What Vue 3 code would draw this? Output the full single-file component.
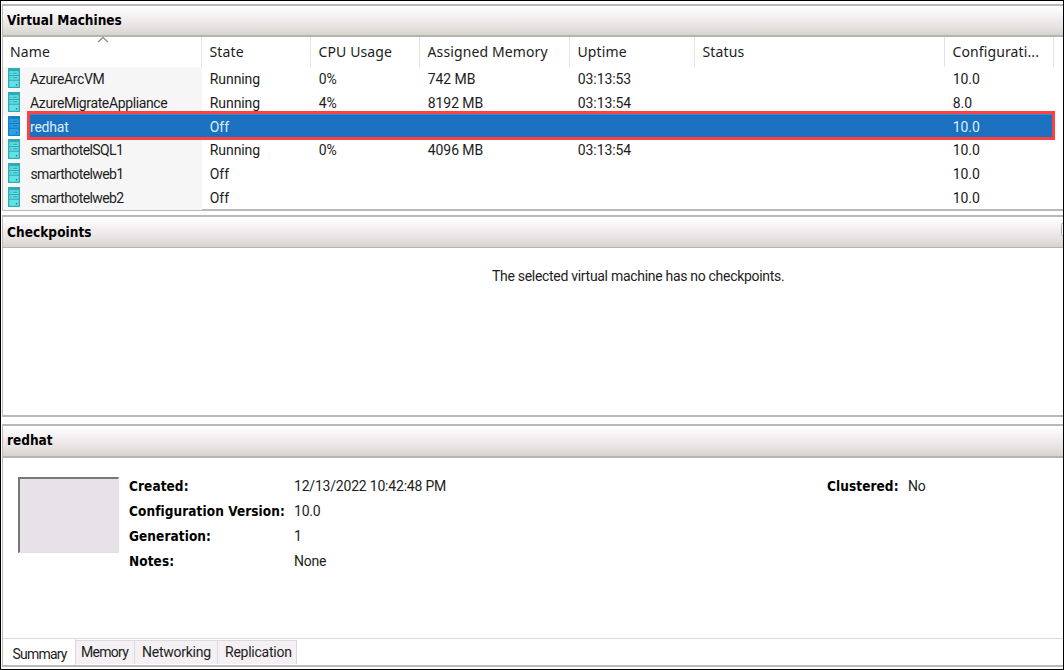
<script setup>
const columns = ['Name', 'State', 'CPU Usage', 'Assigned Memory', 'Uptime', 'Status', 'Configurati...']
const machines = [
  { name: 'AzureArcVM', state: 'Running', cpu: '0%', memory: '742 MB', uptime: '03:13:53', version: '10.0' },
  { name: 'AzureMigrateAppliance', state: 'Running', cpu: '4%', memory: '8192 MB', uptime: '03:13:54', version: '8.0' },
  { name: 'redhat', state: 'Off', cpu: '', memory: '', uptime: '', version: '10.0', selected: true },
  { name: 'smarthotelSQL1', state: 'Running', cpu: '0%', memory: '4096 MB', uptime: '03:13:54', version: '10.0', tight: true },
  { name: 'smarthotelweb1', state: 'Off', cpu: '', memory: '', uptime: '', version: '10.0', tight: true },
  { name: 'smarthotelweb2', state: 'Off', cpu: '', memory: '', uptime: '', version: '10.0', tight: true },
]
const details = [
  ['Created:', '12/13/2022 10:42:48 PM'],
  ['Configuration Version:', '10.0'],
  ['Generation:', '1'],
  ['Notes:', 'None'],
]
const tabs = ['Summary', 'Memory', 'Networking', 'Replication']
</script>

<template>
  <main class="window">
    <section class="panel machines">
      <h2 class="title">Virtual Machines</h2>
      <div class="grid head">
        <span v-for="c in columns" :key="c" class="th">{{ c }}</span>
        <svg class="sort" width="12" height="7" viewBox="0 0 12 7"><path d="M1.2 6 L6 1.3 L10.8 6" fill="none" stroke="#8b8b8b" stroke-width="1.3" /></svg>
      </div>
      <div class="rows">
        <div v-for="m in machines" :key="m.name" class="grid row" :class="{ selected: m.selected }">
          <div class="name" :class="{ tight: m.tight }">
            <svg class="server" width="12" height="20" viewBox="0 0 12 20">
              <rect width="12" height="20" class="edge" />
              <rect x="1.3" y="3.2" width="9.4" height="15.6" class="face" />
              <path d="M1 7.5H11M1 12.2H11" class="lines" />
              <path d="M2.3 5.2H3.6M5 5.2H9.5M2.3 9.8H3.6M5 9.8H9.5" class="slots" />
              <rect x="7.8" y="16" width="1.4" height="1.4" class="dot" />
            </svg>
            <span>{{ m.name }}</span>
          </div>
          <span>{{ m.state }}</span>
          <span>{{ m.cpu }}</span>
          <span>{{ m.memory }}</span>
          <span>{{ m.uptime }}</span>
          <span></span>
          <span>{{ m.version }}</span>
        </div>
      </div>
    </section>

    <section class="panel checkpoints">
      <h2 class="title">Checkpoints<i class="knob"></i></h2>
      <p class="empty">The selected virtual machine has no checkpoints.</p>
    </section>

    <section class="panel info">
      <h2 class="title">redhat</h2>
      <div class="summary">
        <div class="thumb"></div>
        <dl class="facts">
          <template v-for="[label, value] in details" :key="label">
            <dt>{{ label }}</dt>
            <dd>{{ value }}</dd>
          </template>
        </dl>
        <dl class="facts cluster">
          <dt>Clustered:</dt>
          <dd>No</dd>
        </dl>
      </div>
      <nav class="tabs">
        <span v-for="(t, i) in tabs" :key="t" class="tab" :class="['t' + i, { active: i === 0 }]">{{ t }}</span>
      </nav>
    </section>
  </main>
</template>

<style>
body { background: #fff; overflow: hidden; }
</style>

<style scoped>
*, *::before { box-sizing: border-box; }
.window {
  width: 1064px; height: 670px; border: 1px solid #000; padding: 3px 0 0 1px;
  display: flex; flex-direction: column; background: #fff; color: #1c1c1c;
  font: 14px/20px Roboto, "Liberation Sans", sans-serif; overflow: hidden;
}
.panel { border: solid #b9b9b9; border-width: 2px 0 2px 1px; flex: none; display: flex; flex-direction: column; }
.machines { height: 207px; margin-bottom: 4px; }
.checkpoints { height: 202px; margin-bottom: 7px; }
.info { height: 243px; }
.title {
  position: relative; margin: 0; height: 31px; flex: none; padding: 0 0 0 4px; border-bottom: 2px solid #b5b4b5;
  background: linear-gradient(#fff, #f5f1f2 35%, #e6e3e2 70%, #d8d4cb);
  font: bold 13.5px/29px "DejaVu Sans Condensed", "DejaVu Sans", sans-serif; color: #000;
}
.checkpoints .title { line-height: 30px; border-bottom-width: 1px; letter-spacing: 0.06px; }
.info .title { height: 32px; }
.knob { position: absolute; right: -5px; top: 5px; width: 7px; height: 15px; border: 1px solid #aaa; border-radius: 5px; background: #fff; }
.grid { display: grid; grid-template-columns: 199px 109px 109px 150px 125px 250px 109px; }
.head { position: relative; height: 30px; flex: none; font: 14px/29px "Noto Sans", sans-serif; letter-spacing: 0.12px; }
.th { padding-left: 7.5px; border-right: 1px solid #e3e3e3; white-space: nowrap; }
.th:first-child { padding-left: 7px; }
.sort { position: absolute; left: 94px; top: -1px; }
.rows { height: 142px; overflow: visible; }
.row { height: 23.8px; line-height: 24px; letter-spacing: -0.08px; }
.row:last-child { height: 23px; }
.row > span { padding-left: 7.8px; white-space: nowrap; }
.name { display: flex; align-items: flex-start; gap: 9.6px; padding-left: 5.4px; background: #f6f6f6; white-space: nowrap; letter-spacing: -0.38px; }
.name.tight { letter-spacing: -0.6px; gap: 10px; }
.server { margin-top: 1px; flex: none; }
.edge { fill: #2eabb5; }
.face { fill: #64e1e7; }
.lines { stroke: #2fa5b0; fill: none; }
.slots { stroke: #2ea3ae; fill: none; stroke-width: 1.1; }
.dot { fill: #167e8b; }
.selected { position: relative; color: #d9f0ff; }
.selected .name { background: #fff; letter-spacing: -0.2px; }
.selected::before { content: ""; position: absolute; left: 24px; top: -3.6px; width: 1028px; height: 29px; border: 3px solid #fb4141; background: #1c70c0; box-shadow: inset 0 1px #318bd2; }
.selected span { position: relative; }
.selected .edge { fill: #1681c8; }
.selected .face { fill: #2ba3e5; }
.selected .lines, .selected .slots { stroke: #1275bd; }
.selected .dot { fill: #1269b5; }
.empty { margin: 17.5px 0 0 489px; white-space: nowrap; letter-spacing: -0.3px; }
.summary { flex: 1; display: flex; position: relative; padding: 14px 0 0 15px; }
.thumb { width: 101px; height: 76px; margin-top: 5px; border: solid #e2dee2; border-width: 2px 1px 1px 2px; border-top-color: #777; border-left-color: #777; background: #e7e2e7; }
.facts { display: grid; grid-template-columns: 165px auto; grid-auto-rows: 25px; line-height: 25px; margin: 1.5px 0 0 10px; width: 420px; white-space: nowrap; align-content: start; letter-spacing: -0.2px; }
.facts dt { font: bold 13.5px/25px "DejaVu Sans Condensed", "DejaVu Sans", sans-serif; color: #000; letter-spacing: 0.08px; }
.facts dd { margin: 0; }
.cluster { margin-left: 278px; grid-template-columns: 81px auto; width: 120px; }
.tabs { display: flex; height: 27px; flex: none; border-top: 1px solid #ddd7dc; }
.tab { height: 24px; line-height: 23px; margin-top: 1px; padding-left: 5px; background: #f4f0f4; border: solid #ded9de; border-width: 1px 1px 0 0; letter-spacing: -0.25px; }
.active { height: 26px; margin-top: 0; line-height: 30px; padding-left: 9.5px; background: #fff; border-top: 0; }
.t0 { width: 73px; letter-spacing: -0.8px; }
.t1 { width: 59px; letter-spacing: -0.7px; }
.t2 { width: 83px; padding-left: 7px; }
.t3 { width: 79px; padding-left: 7px; }
</style>
